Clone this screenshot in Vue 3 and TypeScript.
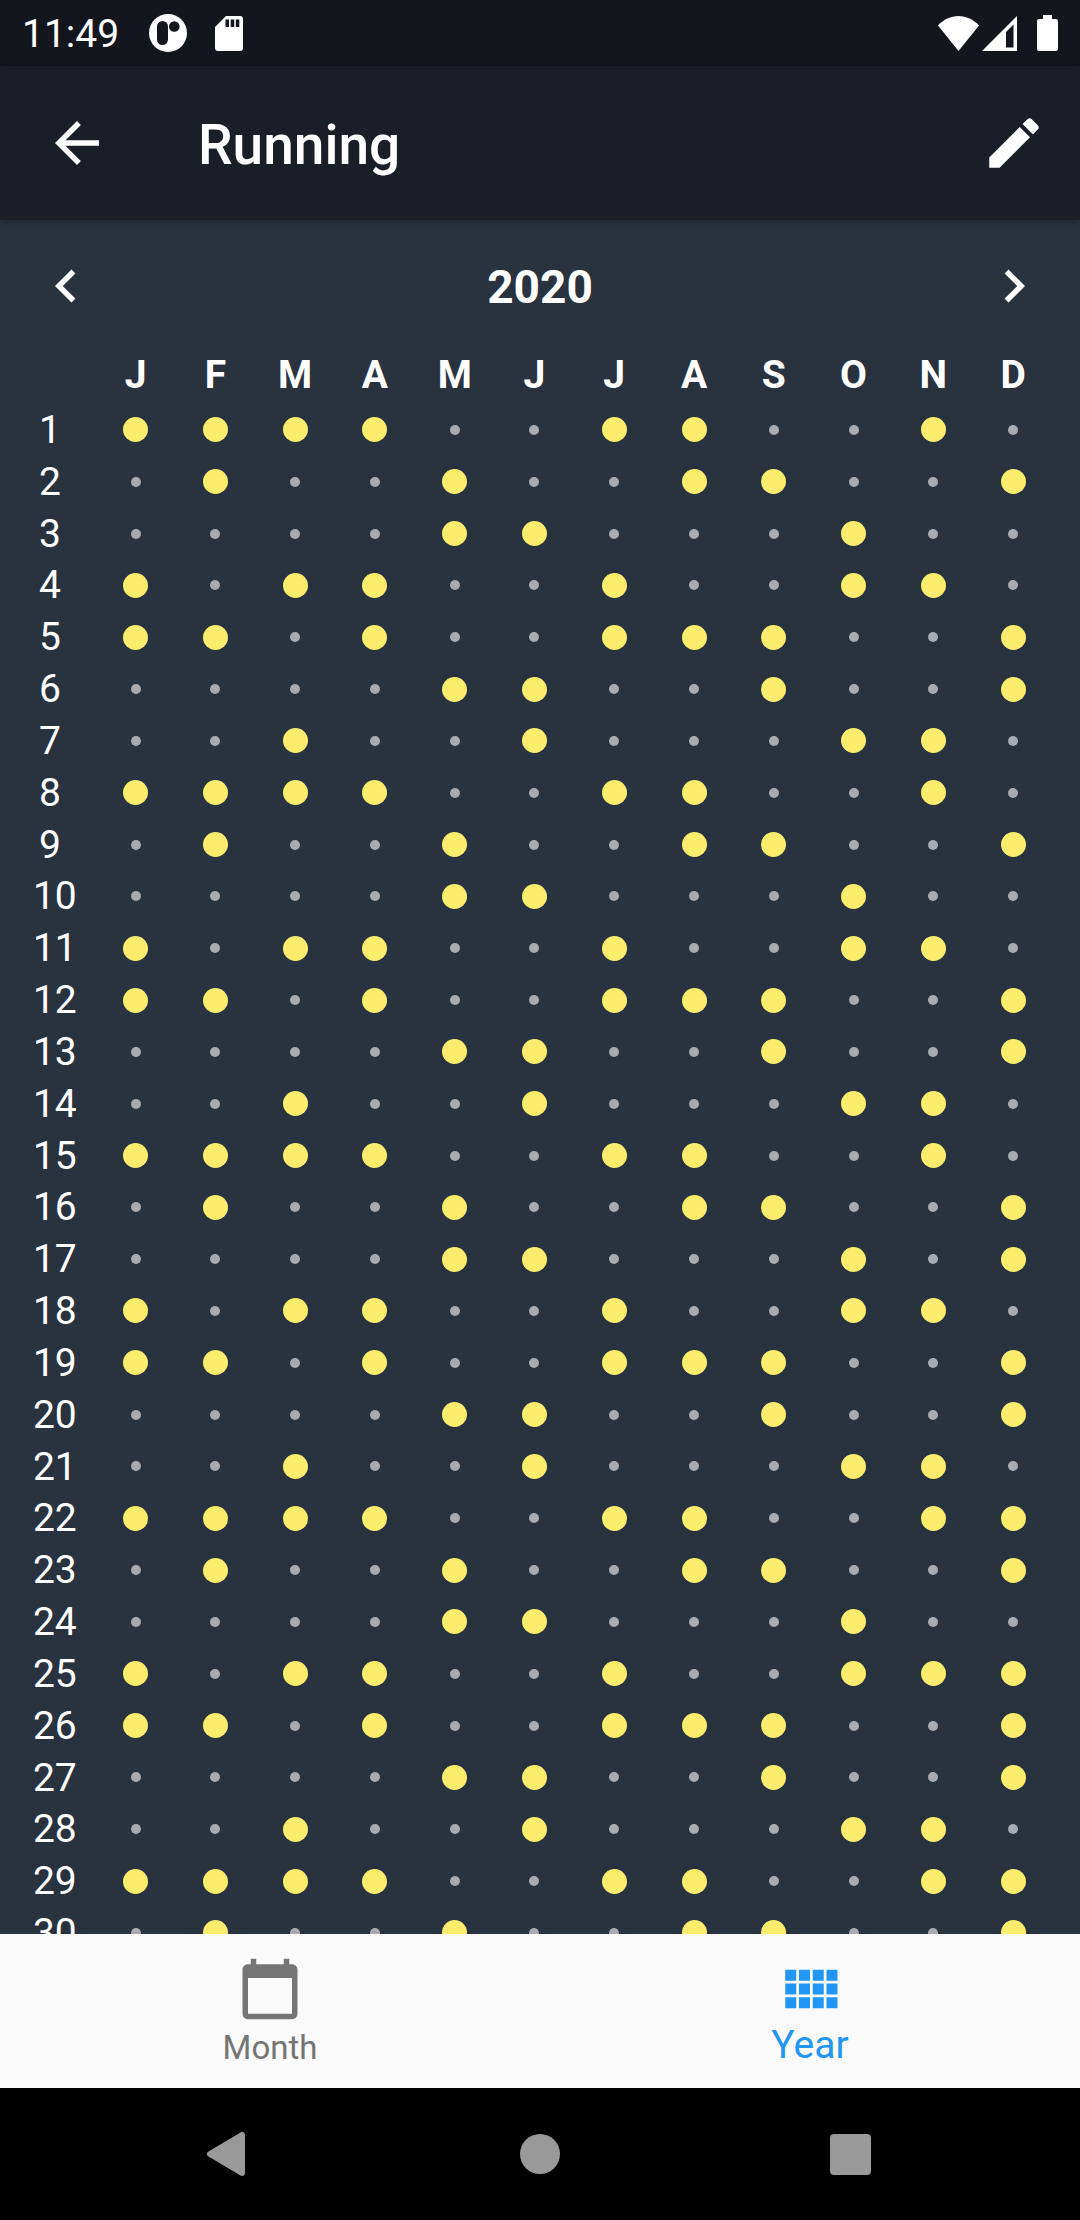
<script setup lang="ts">
import { ref, computed } from 'vue'

type Tab = 'month' | 'year'

const title = 'Running'
const year = ref(2020)
const tab = ref<Tab>('year')

const months: string[] = ['J', 'F', 'M', 'A', 'M', 'J', 'J', 'A', 'S', 'O', 'N', 'D']

// One string per day of the month, one character per month; 1 marks a completed day.
const log: string[] = [
  '111100110010',
  '010010011001',
  '000011000100',
  '101100100110',
  '110100111001',
  '000011001001',
  '001001000110',
  '111100110010',
  '010010011001',
  '000011000100',
  '101100100110',
  '110100111001',
  '000011001001',
  '001001000110',
  '111100110010',
  '010010011001',
  '000011000101',
  '101100100110',
  '110100111001',
  '000011001001',
  '001001000110',
  '111100110011',
  '010010011001',
  '000011000100',
  '101100100111',
  '110100111001',
  '000011001001',
  '001001000110',
  '111100110011',
  '010010011001',
]

const rows = computed(() =>
  log.map((line, i) => ({
    label: String(i + 1).padEnd(2, ' '),
    done: line.split('').map((c) => c === '1'),
  })),
)
</script>

<template>
  <div class="app">
    <div class="status-bar">
      <span class="clock">11:49</span>
      <svg class="status-icon notice" width="38" height="38" viewBox="0 0 38 38" aria-hidden="true">
        <circle cx="19" cy="19" r="19" fill="#fff" />
        <rect x="8" y="7" width="11" height="24" rx="5.5" fill="#13161d" />
        <circle cx="25.300" cy="12.500" r="5.300" fill="#13161d" />
      </svg>
      <svg class="status-icon" width="28" height="35" viewBox="0 0 28 35" aria-hidden="true">
        <path fill="#fff" d="M11 0H25a3 3 0 0 1 3 3V32a3 3 0 0 1-3 3H3a3 3 0 0 1-3-3V11Z" />
        <path fill="#13161d" d="M10.500 3.500h3.500v7.500h-3.500zM15.700 3.500h3.500v7.500h-3.500zM20.800 3.500h3.500v7.500h-3.500z" />
      </svg>
      <span class="spacer"></span>
      <svg class="status-icon" width="41" height="35" viewBox="0 0 41 35" aria-hidden="true">
        <path fill="#fff" d="M20.500 35 0 9.500C5.500 3.500 13 0 20.500 0S35.500 3.500 41 9.500Z" />
      </svg>
      <svg class="status-icon signal" width="35" height="35" viewBox="0 0 35 35" aria-hidden="true">
        <path fill="#fff" fill-rule="evenodd" d="M35 0V35H0ZM24 16V31.500H31.500V8.500Z" />
      </svg>
      <svg class="status-icon battery" width="21" height="36" viewBox="0 0 21 36" aria-hidden="true">
        <path fill="#fff" d="M6 0h9v4h4a2 2 0 0 1 2 2v28a2 2 0 0 1-2 2H2a2 2 0 0 1-2-2V6a2 2 0 0 1 2-2h4Z" />
      </svg>
    </div>

    <header class="app-bar">
      <button class="icon-button back" type="button" aria-label="Back">
        <svg class="icon" viewBox="0 0 24 24"><path d="M20 11H7.830l5.590-5.590L12 4l-8 8 8 8 1.410-1.410L7.830 13H20v-2z" /></svg>
      </button>
      <h1 class="title">{{ title }}</h1>
      <button class="icon-button" type="button" aria-label="Edit">
        <svg class="icon" viewBox="0 0 24 24"><path d="M3 17.250V21h3.750L17.810 9.940l-3.750-3.750L3 17.250zM20.710 7.040c.390-.390.390-1.020 0-1.410l-2.340-2.340c-.390-.390-1.020-.390-1.410 0l-1.830 1.830 3.750 3.750 1.830-1.830z" /></svg>
      </button>
    </header>

    <main class="content">
      <div class="year-bar">
        <button class="icon-button" type="button" aria-label="Previous year" @click="year--">
          <svg class="icon" viewBox="0 0 24 24"><path d="M15.410 7.410 14 6l-6 6 6 6 1.410-1.410L10.830 12z" /></svg>
        </button>
        <h2 class="year">{{ year }}</h2>
        <button class="icon-button" type="button" aria-label="Next year" @click="year++">
          <svg class="icon" viewBox="0 0 24 24"><path d="M10 6 8.590 7.410 13.170 12l-4.580 4.590L10 18l6-6z" /></svg>
        </button>
      </div>

      <div class="table-wrap">
        <table class="days">
          <thead>
            <tr>
              <td></td>
              <th v-for="(m, i) in months" :key="i" scope="col">{{ m }}</th>
            </tr>
          </thead>
          <tbody>
            <tr v-for="row in rows" :key="row.label">
              <th scope="row">{{ row.label }}</th>
              <td v-for="(d, i) in row.done" :key="i">
                <span class="dot" :class="{ done: d }"></span>
              </td>
            </tr>
          </tbody>
        </table>
      </div>
    </main>

    <nav class="tabs">
      <button class="tab" :class="{ active: tab === 'month' }" type="button" @click="tab = 'month'">
        <svg class="icon" viewBox="0 0 24 24" aria-hidden="true"><path d="M20 3h-1V1h-2v2H7V1H5v2H4c-1.100 0-2 .900-2 2v16c0 1.100.900 2 2 2h16c1.100 0 2-.900 2-2V5c0-1.100-.900-2-2-2zm0 18H4V8h16v13z" /></svg>
        <span class="tab-label">Month</span>
      </button>
      <button class="tab" :class="{ active: tab === 'year' }" type="button" @click="tab = 'year'">
        <svg class="icon" viewBox="0 0 24 24" aria-hidden="true"><path d="M3 5h4v4H3zM8 5h4v4H8zM13 5h4v4h-4zM18 5h4v4h-4zM3 10h4v4H3zM8 10h4v4H8zM13 10h4v4h-4zM18 10h4v4h-4zM3 15h4v4H3zM8 15h4v4H8zM13 15h4v4h-4zM18 15h4v4h-4z" /></svg>
        <span class="tab-label">Year</span>
      </button>
    </nav>

    <div class="system-nav">
      <button type="button" aria-label="System back">
        <svg width="48" height="48" viewBox="0 0 48 48"><path fill="#999" stroke="#999" stroke-width="6" stroke-linejoin="round" d="M36 5V43L4 24Z" /></svg>
      </button>
      <button type="button" aria-label="Home">
        <svg width="48" height="48" viewBox="0 0 48 48"><circle cx="24" cy="24" r="20" fill="#999" /></svg>
      </button>
      <button type="button" aria-label="Recent apps">
        <svg width="48" height="48" viewBox="0 0 48 48"><rect x="4" y="4" width="41" height="41" rx="4" fill="#999" /></svg>
      </button>
    </div>
  </div>
</template>

<style>
body {
  margin: 0;
  background: #000;
}
</style>

<style scoped>
.app {
  display: flex;
  flex-direction: column;
  height: 100vh;
  font-family: Roboto, 'Noto Sans', sans-serif;
  color: #fff;
  background: #29323f;
}

button {
  margin: 0;
  padding: 0;
  border: 0;
  background: none;
  color: inherit;
  font: inherit;
  cursor: pointer;
}

svg {
  display: block;
}

.icon {
  width: 66px;
  height: 66px;
  fill: currentColor;
}

.status-bar {
  display: flex;
  flex: none;
  align-items: center;
  box-sizing: border-box;
  height: 66px;
  padding: 0 22px;
  background: #13161d;
}

.clock {
  padding-top: 2px;
  font-size: 39px;
  line-height: 64px;
}

.status-icon {
  flex: none;
}

.notice {
  margin: 0 28px 0 30px;
}

.signal {
  margin: 0 20px 0 3px;
}

.spacer {
  flex: 1;
}

.app-bar {
  position: relative;
  display: flex;
  flex: none;
  align-items: center;
  height: 154px;
  background: #1a1e26;
  box-shadow: 0 2px 10px rgba(0, 0, 0, 0.3);
}

.icon-button {
  display: flex;
  flex: none;
  align-items: center;
  justify-content: center;
  width: 132px;
  height: 132px;
}

.back {
  width: 154px;
}

.title {
  flex: 1;
  margin: 0;
  padding: 4px 0 0 44px;
  font-size: 55px;
  font-weight: 500;
  line-height: 66px;
}

.content {
  flex: 1;
  min-height: 0;
  overflow-y: auto;
  scrollbar-width: none;
}

.year-bar {
  display: flex;
  align-items: center;
  justify-content: space-between;
}

.year {
  margin: 0;
  padding-top: 2px;
  font-size: 46px;
  font-weight: 700;
  line-height: 66px;
}

.table-wrap {
  padding: 0 27px 16px 16px;
}

.days {
  width: 100%;
  table-layout: fixed;
  border-collapse: collapse;
  font-size: 39px;
}

.days th,
.days td {
  padding: 0;
  text-align: center;
  vertical-align: middle;
}

.days thead th {
  padding-bottom: 6px;
  font-weight: 700;
  line-height: 46px;
}

.days tbody th {
  padding: 2px 2px 0 0;
  font-weight: 400;
  line-height: 1.278;
  white-space: pre;
}

.dot {
  display: block;
  width: 10px;
  height: 10px;
  margin: 0 auto;
  border-radius: 50%;
  background: #a9abb0;
}

.dot.done {
  width: 25px;
  height: 25px;
  background: #faed6d;
}

.tabs {
  display: flex;
  flex: none;
  background: #fafafa;
}

.tab {
  display: flex;
  flex: 1;
  flex-direction: column;
  align-items: center;
  box-sizing: border-box;
  height: 154px;
  padding-top: 22px;
  color: #757575;
}

.tab-label {
  font-size: 33px;
  line-height: 52px;
}

.tab.active {
  color: #2196f3;
}

.tab.active .tab-label {
  font-size: 39px;
  line-height: 46px;
}

.system-nav {
  display: flex;
  flex: none;
  height: 132px;
  padding: 0 75px;
  background: #000;
}

.system-nav button {
  display: flex;
  flex: 1;
  align-items: center;
  justify-content: center;
}
</style>
